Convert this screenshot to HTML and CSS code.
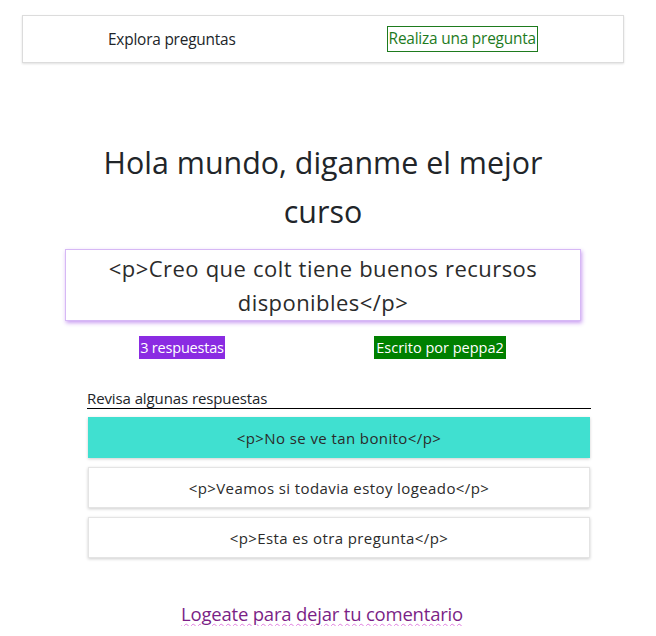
FILE: index.html
```html
<!DOCTYPE html>
<html lang="es">
<head>
<meta charset="utf-8">
<link rel="stylesheet" href="styles.css">
</head>
<body>
<nav class="nav">
  <a class="nav-link" href="#">Explora preguntas</a>
  <a class="nav-link nav-cta" href="#">Realiza una pregunta</a>
</nav>
<main class="main">
  <h1 class="title">Hola mundo, diganme el mejor curso</h1>
  <div class="question">&lt;p&gt;Creo que colt tiene buenos recursos disponibles&lt;/p&gt;</div>
  <div class="badges">
    <div class="badge-cell"><span class="badge badge-purple">3 respuestas</span></div>
    <div class="badge-cell"><span class="badge badge-green">Escrito por peppa2</span></div>
  </div>
  <section class="answers">
    <h2 class="answers-title">Revisa algunas respuestas</h2>
    <div class="answer answer-active">&lt;p&gt;No se ve tan bonito&lt;/p&gt;</div>
    <div class="answer">&lt;p&gt;Veamos si todavia estoy logeado&lt;/p&gt;</div>
    <div class="answer">&lt;p&gt;Esta es otra pregunta&lt;/p&gt;</div>
  </section>
  <div class="login"><a class="login-link" href="#">Logeate para dejar tu comentario</a></div>
</main>
</body>
</html>
```
FILE: styles.css
```css
* { box-sizing: border-box; }
body {
  margin: 0;
  background: #fff;
  font-family: "Open Sans", "Noto Sans", sans-serif;
  color: #212529;
}
.nav {
  margin: 15px 0 0 22px;
  width: 602px;
  height: 48px;
  border: 1px solid #dcdcdc;
  box-shadow: 0 1px 2px rgba(0,0,0,0.12);
  display: flex;
  align-items: center;
}
.nav-link {
  font-size: 15.4px;
  color: #212529;
  text-decoration: none;
  letter-spacing: -0.2px;
}
.nav-link:first-child { margin-left: 85px; }
.nav-cta {
  margin-left: 151px;
  color: #1e7b1e;
  border: 1px solid #1e7b1e;
  padding: 1px 1px 2px;
  line-height: 21px;
}
.main { width: 656px; }
.title {
  margin: 75px 0 0 65px;
  width: 516px;
  font-size: 30.4px;
  font-weight: 400;
  line-height: 49px;
  text-align: center;
  padding: 0 30px;
  color: #212529;
}
.question {
  margin: 13px 0 0 65px;
  width: 516px;
  border: 1px solid #d6b8f5;
  box-shadow: 1px 2px 4px rgba(138,43,226,0.45);
  font-size: 22px;
  letter-spacing: 0.45px;
  word-spacing: 0.5px;
  line-height: 34px;
  text-align: center;
  padding: 1px 20px;
  color: #2b2b2b;
}
.badges {
  margin: 15px 0 0 53px;
  width: 516px;
  display: grid;
  grid-template-columns: 1fr 1fr;
}
.badge-cell { text-align: center; }
.badge {
  display: inline-block;
  color: #fff;
  font-size: 14.5px;
  line-height: 23px;
  padding: 0 1px;
  letter-spacing: -0.2px;
}
.badge-purple { background: #8a2be2; }
.badge-green { background: #008000; letter-spacing: 0; padding: 0 2px; }
.answers {
  margin: 30px 0 0 87px;
  width: 504px;
}
.answers-title {
  margin: 0 0 8px;
  font-size: 15px;
  font-weight: 400;
  line-height: 19px;
  border-bottom: 1px solid #000;
  padding-bottom: 0;
  letter-spacing: -0.1px;
}
.answer {
  margin: 0 1px 9px;
  height: 41px;
  display: flex;
  align-items: center;
  justify-content: center;
  font-size: 15px;
  letter-spacing: 0.4px;
  border: 1px solid #e4e4e4;
  box-shadow: 0 1px 3px rgba(0,0,0,0.2);
  background: #fff;
  color: #2b2b2b;
}
.answer-active {
  background: #40e0d0;
  border-color: #40e0d0;
}
.login {
  margin-top: 43px;
  width: 644px;
  text-align: center;
}
.login-link {
  font-size: 18.5px;
  color: #7b1f86;
  text-decoration: underline wavy #e07ee0;
  text-decoration-thickness: 1px;
  text-underline-offset: 2px;
  letter-spacing: -0.2px;
}
```
